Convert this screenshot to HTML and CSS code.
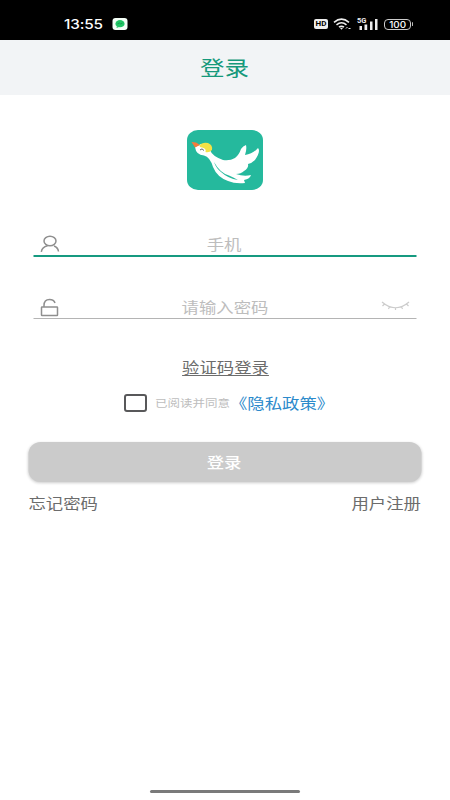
FILE: index.html
```
<!DOCTYPE html>
<html lang="zh-CN">
<head>
<meta charset="utf-8">
<title>登录</title>
<link rel="stylesheet" href="styles.css">
</head>
<body>
<div class="status">
  <span class="time wide">13:55</span>
  <svg class="chat" width="16" height="12" viewBox="0 0 16 12"><rect x=".5" width="15" height="12" rx="3" fill="#f4fff7"/><ellipse cx="8" cy="5.700" rx="4.600" ry="3.600" fill="#20c565"/><path d="M5 8l-.5 2 2.500-1" fill="#20c565"/><path d="M5.500 5.800l2-.8 1 .9 2-.9" fill="none" stroke="#139447" stroke-width=".8"/></svg>
  <span class="hd">HD</span>
  <svg class="wifi" width="19" height="13" viewBox="0 0 19 13" fill="none" stroke="#eee" stroke-width="1.600"><path d="M1 4.300Q8.500-2 16 4.300M3.500 6.800Q8.500 2.800 13.500 6.800M6 9.200Q8.500 7.200 11 9.200"/><path d="M6.800 9.800h3.400L8.500 11.800z" fill="#eee" stroke="none"/><path d="M13 10.500l1.500-1.500M15.500 10.500h2" stroke-width="1"/></svg>
  <div class="signal"><svg width="20" height="12" viewBox="0 0 20 12" fill="#eee"><path d="M1.500 8h2.500V12h-2.500zM6.500 6.500H9.200V12H6.500zM12 3.500h2.500V12H12zM17 1h2.500v11H17z"/></svg><span class="gen">5G</span></div>
  <div class="battery"><span>100</span></div>
</div>
<header class="header"><h1 class="wide">登录</h1></header>
<main class="main">
  <svg class="logo" width="76" height="60" viewBox="0 0 76 60">
    <rect width="76" height="60" rx="11" ry="10" fill="#25b99d"/>
    <path d="M8 17L14 14L23 20Q25 26 36 30Q43 31 48 28Q52 25 54 19Q56 16 59 15Q60 19 58 25Q66 24 71 18Q74 21 68 30Q65 33 61 34Q62 38 57 41Q54 44 49 44Q57 47 64 45Q63 49 57 50L58 53Q48 54 41 51Q30 47 26 37Q23 27 17 25.500Q9 25 8 17Z" fill="#fff"/>
    <path d="M27 32Q33 43 42 45.500Q46 47 51 50Q41 48.500 34 42Q29 38 27 32Z" fill="#25b99d"/>
    <path d="M12.500 15.500Q15 12 21 13Q26 15 25 20Q22 23 18.500 22Q20 18 13 17Z" fill="#f4e246"/>
    <path d="M4.500 12L9 12.500L13 15L8 17.500Z" fill="#f47b3b"/>
    <path d="M13 20q2-2.500 4 .5" fill="none" stroke="#555" stroke-width=".9"/>
  </svg>
  <div class="field active">
    <svg width="24" height="20" viewBox="0 0 24 20" fill="none" stroke="#8f8f8f" stroke-width="1.500"><ellipse cx="10.500" cy="7" rx="6" ry="4.700"/><path d="M1.800 17.800Q2.500 13 8 11.700M14.500 12Q18.500 13.500 19 17.500"/></svg>
    <span class="hint wide">手机</span><i></i>
  </div>
  <div class="field password">
    <svg width="24" height="20" viewBox="0 0 24 20" fill="none" stroke="#8f8f8f" stroke-width="1.500"><rect x="2" y="9" width="16" height="8.500" rx=".5"/><path d="M4.500 9V7.500Q4.500 1.500 10 1.500Q14.500 1.500 15.500 5"/></svg>
    <span class="hint wide">请输入密码</span>
    <svg class="eye" width="30" height="12" viewBox="0 0 30 12" fill="none" stroke="#ccc" stroke-width="1.200"><path d="M1.500 2Q15 13.500 28.500 2M4 4L2 6M9 6.700L8 9M15 7.700V10M21 6.700L22 9M26 4L28 6"/></svg>
  </div>
  <a class="code wide">验证码登录</a>
  <div class="agree"><span class="box"></span><span class="small wide">已阅读并同意</span><a class="policy wide">《隐私政策》</a></div>
  <button class="submit"><span class="wide">登录</span></button>
  <div class="links"><a class="wide left">忘记密码</a><a class="wide right">用户注册</a></div>
</main>
<div class="home"></div>
</body>
</html>
```
FILE: styles.css
```
* { box-sizing: border-box; }
body { margin: 0; height: 800px; display: flex; flex-direction: column; background: #fff; overflow: hidden; font: 14.6px/20px "Noto Sans CJK SC", sans-serif; color: #6c6c6c; }
svg { display: block; flex: none; }
.wide { display: inline-block; white-space: nowrap; transform: scaleX(1.19); }
.status { height: 40px; flex: none; background: #000; color: #fff; display: flex; align-items: center; padding: 8px 39px 0 64px; }
.time { font: 500 13.2px/16px Inter, sans-serif; transform: scaleX(1.16); transform-origin: left; width: 48px; letter-spacing: -.1px; }
.hd { margin-left: auto; width: 14px; height: 10px; border-radius: 2px; background: #eee; color: #000; font: 700 8px/10px Roboto, sans-serif; text-align: center; }
.wifi { margin-left: 5px; }
.signal { position: relative; width: 20px; margin-left: 6px; }
.gen { position: absolute; left: -1px; top: -1px; background: #000; font: 700 7.5px/7px Roboto, sans-serif; color: #eee; }
.battery { position: relative; width: 27px; height: 11px; margin-left: 6px; border: 1px solid #ccc; border-radius: 4px; display: flex; justify-content: center; align-items: center; font: 500 9px/9px Inter, sans-serif; }
.battery span { transform: scaleX(1.1); }
.battery::after { content: ""; position: absolute; right: -3px; top: 2.5px; width: 1.5px; height: 4px; background: #bbb; border-radius: 1px; }
.header { height: 55px; flex: none; background: #f2f4f6; display: flex; align-items: center; justify-content: center; padding-bottom: 1px; }
h1 { margin: 0; font-size: 20.6px; line-height: 28px; font-weight: 400; color: #16997b; }
.main { display: flex; flex-direction: column; align-items: center; padding: 35px 28px 0; }
.field { width: 383px; height: 28px; margin-top: 39px; display: grid; grid-template-columns: 30px 1fr 30px; align-items: start; padding: 0 6px; border-bottom: 1px solid #b4b4b4; transform: translateX(-.5px); }
.field.active { border-bottom: 2px solid #169a80; }
.field.password { margin-top: 34px; }
.hint { color: #bdbdbd; justify-self: center; margin-top: 5px; }
.password .hint { margin-top: 6px; }
.field svg { margin-top: 5px; }
.field.password svg { margin-top: 6.5px; }
.field.password .eye { margin: 8.5px 0 0; }
.code { margin-top: 38px; text-decoration: underline; text-decoration-thickness: 1px; text-underline-offset: 2px; }
.agree { display: flex; align-items: center; height: 20px; margin-top: 16px; width: 203px; }
.box { width: 23px; height: 18px; border: 2px solid #58585a; border-radius: 3px; flex: none; }
.small { font-size: 10.5px; color: #bdbdbd; transform-origin: left; margin-left: 8px; width: 75px; }
.policy { color: #2c8acb; transform-origin: left; }
.submit { width: 393px; height: 40px; margin-top: 29px; padding: 0; border: 0; border-radius: 12px; background: #cbcbcb; box-shadow: 0 1px 3px #0003; color: #fff; font: 500 14.6px/20px "Noto Sans CJK SC", sans-serif; }
.links { width: 393px; margin-top: 11px; display: flex; justify-content: space-between; }
.submit, .links { transform: translateX(-.5px); }
.left { transform-origin: left; }
.right { transform-origin: right; }
.home { width: 150px; height: 3px; margin: auto auto 7px; border-radius: 2px; background: #7a7a7a; }
```
